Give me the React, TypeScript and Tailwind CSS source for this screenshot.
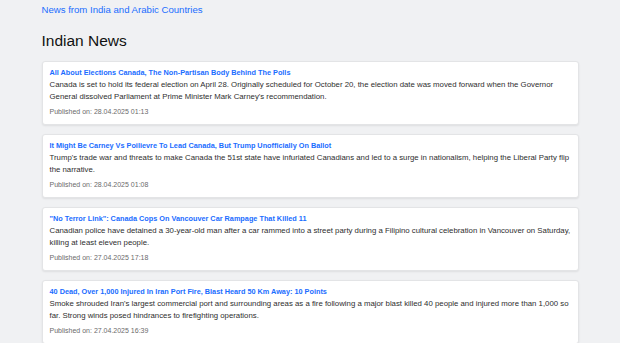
import React from "react";

type NewsItem = { title: string; text: string; published: string };

const items: NewsItem[] = [
  {
    title: "All About Elections Canada, The Non-Partisan Body Behind The Polls",
    text: "Canada is set to hold its federal election on April 28. Originally scheduled for October 20, the election date was moved forward when the Governor General dissolved Parliament at Prime Minister Mark Carney's recommendation.",
    published: "28.04.2025 01:13",
  },
  {
    title: "It Might Be Carney Vs Poilievre To Lead Canada, But Trump Unofficially On Ballot",
    text: "Trump's trade war and threats to make Canada the 51st state have infuriated Canadians and led to a surge in nationalism, helping the Liberal Party flip the narrative.",
    published: "28.04.2025 01:08",
  },
  {
    title: "\"No Terror Link\": Canada Cops On Vancouver Car Rampage That Killed 11",
    text: "Canadian police have detained a 30-year-old man after a car rammed into a street party during a Filipino cultural celebration in Vancouver on Saturday, killing at least eleven people.",
    published: "27.04.2025 17:18",
  },
  {
    title: "40 Dead, Over 1,000 Injured In Iran Port Fire, Blast Heard 50 Km Away: 10 Points",
    text: "Smoke shrouded Iran's largest commercial port and surrounding areas as a fire following a major blast killed 40 people and injured more than 1,000 so far. Strong winds posed hindrances to firefighting operations.",
    published: "27.04.2025 16:39",
  },
];

const NewsCard = ({ item }: { item: NewsItem }) => (
  <div className="bg-white border border-[#e3e4e6] rounded-[3px] shadow-[0_1px_2px_rgba(0,0,0,0.08)] px-[7px] pt-[5px] pb-[6px]">
    <a href="#" className="block text-[7.3px] leading-[12px] font-bold text-[#1a6dff]">
      {item.title}
    </a>
    <p className="text-[7.8px] leading-[12px] text-[#2e2e2e]">{item.text}</p>
    <span className="block mt-[3px] text-[7px] leading-[12px] text-[#6b6b6b]">
      Published on: {item.published}
    </span>
  </div>
);

export default function App() {
  return (
    <div className="min-h-[343px] bg-[#f0f1f3] font-['Liberation_Sans',Arial,sans-serif]">
      <div className="w-[537px] mx-auto pt-[4px]">
        <a href="#" className="block text-[9.6px] leading-[12px] text-[#1a6dff]">
          News from India and Arabic Countries
        </a>
        <h1 className="mt-[15px] text-[15.5px] leading-[20px] text-[#111]">Indian News</h1>
        <div className="mt-[10px] flex flex-col gap-[9px]">
          {items.map((item) => (
            <NewsCard key={item.published} item={item} />
          ))}
        </div>
      </div>
    </div>
  );
}
